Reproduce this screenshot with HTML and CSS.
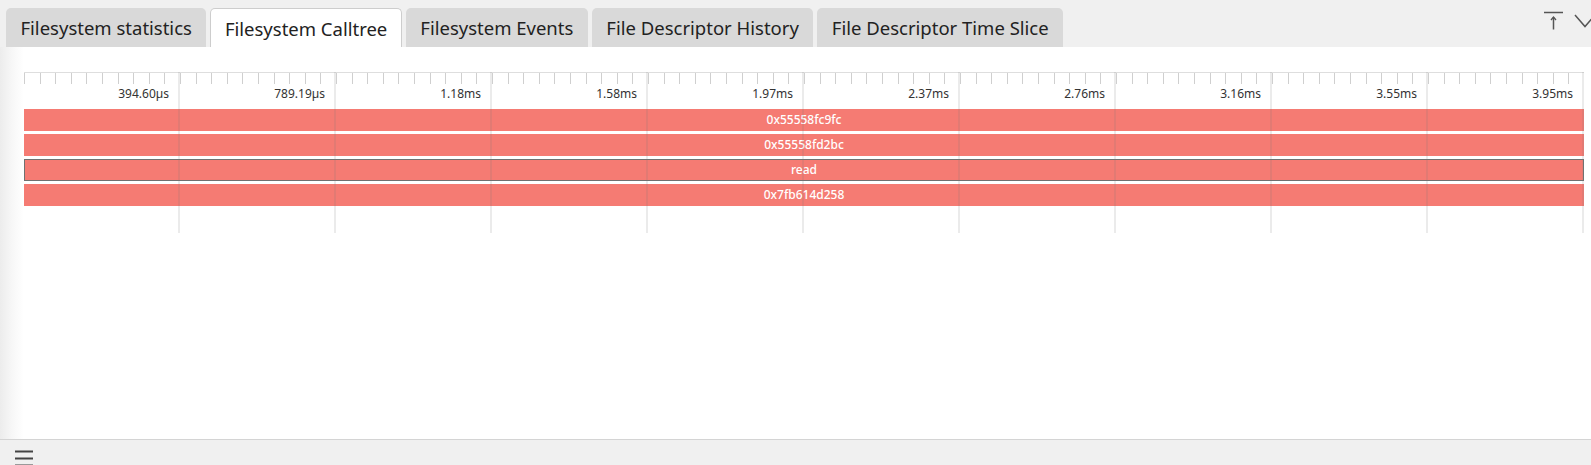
FILE: index.html
```html
<!DOCTYPE html>
<html>
<head>
<meta charset="utf-8">
<link rel="stylesheet" href="styles.css">
</head>
<body>
<div class="app">
  <div class="tabbar">
    <div class="tab">Filesystem statistics</div>
    <div class="tab active">Filesystem Calltree</div>
    <div class="tab">Filesystem Events</div>
    <div class="tab">File Descriptor History</div>
    <div class="tab">File Descriptor Time Slice</div>
    <div class="tab-tools">
      <svg class="tools-svg" width="56" height="47" viewBox="0 0 56 47">
        <line x1="1" y1="12.5" x2="20" y2="12.5" stroke="#555" stroke-width="1.5"/>
        <line x1="10.5" y1="17" x2="10.5" y2="29.5" stroke="#555" stroke-width="1.5"/>
        <path d="M8 20 L10.5 17 L13 20" fill="none" stroke="#555" stroke-width="1.3"/>
        <path d="M32 15 L42 26.5 L52 15" fill="none" stroke="#555" stroke-width="1.5"/>
      </svg>
    </div>
  </div>
  <div class="content">
    <div class="timeline">
      <div class="ruler">
        <div class="seg"><span>394.60µs</span></div>
        <div class="seg"><span>789.19µs</span></div>
        <div class="seg"><span>1.18ms</span></div>
        <div class="seg"><span>1.58ms</span></div>
        <div class="seg"><span>1.97ms</span></div>
        <div class="seg"><span>2.37ms</span></div>
        <div class="seg"><span>2.76ms</span></div>
        <div class="seg"><span>3.16ms</span></div>
        <div class="seg"><span>3.55ms</span></div>
        <div class="seg"><span>3.95ms</span></div>
      </div>
      <div class="tracks">
        <div class="bar">0x55558fc9fc</div>
        <div class="bar">0x55558fd2bc</div>
        <div class="bar selected">read</div>
        <div class="bar">0x7fb614d258</div>
      </div>
      <div class="gridlines">
        <div class="gl"></div><div class="gl"></div><div class="gl"></div><div class="gl"></div><div class="gl"></div>
        <div class="gl"></div><div class="gl"></div><div class="gl"></div><div class="gl"></div><div class="gl"></div>
      </div>
    </div>
  </div>
  <div class="footer">
    <svg class="menu-svg" width="20" height="26" viewBox="0 0 20 26">
      <rect x="1" y="11.5" width="18" height="2" fill="#444"/>
      <rect x="1" y="18.5" width="18" height="2" fill="#444"/>
      <rect x="1" y="25.5" width="18" height="2" fill="#444"/>
    </svg>
  </div>
</div>
</body>
</html>
```
FILE: styles.css
```css
html, body {
  margin: 0;
  padding: 0;
  overflow: hidden;
}
body {
  width: 1591px;
  height: 465px;
  font-family: "Noto Sans", "Open Sans", sans-serif;
  background: #fff;
}
.app {
  display: flex;
  flex-direction: column;
  height: 465px;
}
.tabbar {
  flex: none;
  height: 47px;
  box-sizing: border-box;
  background: #f0f0f0;
  display: flex;
  align-items: flex-end;
  gap: 4px;
  padding-left: 6px;
}
.tab {
  height: 39px;
  box-sizing: border-box;
  padding: 0 14.5px;
  background: #d9d9d9;
  border-radius: 5px 5px 0 0;
  font-size: 18.5px;
  color: #222;
  display: flex;
  align-items: center;
  white-space: nowrap;
}
.tab.active {
  background: #fff;
  border: 1px solid #cdcdcd;
  border-bottom: none;
  padding: 0 13.5px;
}
.tab-tools {
  margin-left: auto;
  margin-right: -8px;
  align-self: stretch;
  display: flex;
}
.content {
  flex: 1;
  background: linear-gradient(to right, #ececec 0, #f7f7f7 12px, #ffffff 24px);
  padding: 25px 0 0 24px;
}
.timeline {
  position: relative;
  width: 1560px;
  height: 161px;
}
.ruler {
  display: flex;
  height: 37px;
  box-sizing: border-box;
  border-top: 1px solid #dedede;
  background-image: repeating-linear-gradient(to right, #cfcfcf 0, #cfcfcf 1px, transparent 1px, transparent 15.6px);
  background-size: 100% 11px;
  background-repeat: no-repeat;
}
.seg {
  flex: 1;
  display: flex;
  justify-content: flex-end;
  padding: 13px 11px 0 0;
  font-size: 12px;
  line-height: 15px;
  color: #333;
}
.tracks {
  display: flex;
  flex-direction: column;
  gap: 3px;
}
.bar {
  height: 22px;
  box-sizing: border-box;
  background: #f57b73;
  color: #fff;
  font-size: 12px;
  font-weight: 500;
  line-height: 22px;
  text-align: center;
}
.bar.selected {
  border: 1px solid #707070;
  line-height: 20px;
}
.gridlines {
  position: absolute;
  inset: 0;
  display: flex;
  pointer-events: none;
}
.gl {
  flex: 1;
  border-right: 2px solid rgba(120, 120, 120, 0.15);
}
.footer {
  flex: none;
  height: 26px;
  box-sizing: border-box;
  border-top: 1px solid #d4d4d4;
  background: #f0f0f0;
  padding-left: 14px;
  display: flex;
  overflow: hidden;
}
.menu-svg {
  display: block;
  margin-top: -1px;
}
```
